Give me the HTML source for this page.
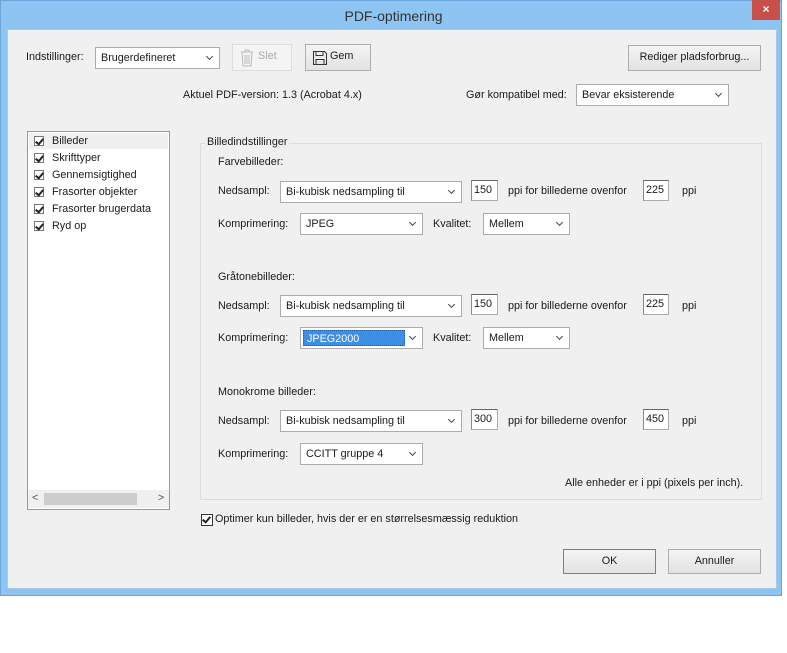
<!DOCTYPE html>
<html><head><meta charset="utf-8"><style>
*{box-sizing:border-box;margin:0;padding:0}
body{width:787px;height:653px;background:#fff;position:relative;font-family:"Liberation Sans",sans-serif;font-size:10.8px;color:#1a1a1a;overflow:hidden}
.a{position:absolute}
.t{position:absolute;white-space:nowrap;line-height:13px}
.frame{left:0;top:0;width:782px;height:596px;background:#8ec4f2;border:1px solid #6aa6dc}
.inner{left:7px;top:29px;width:770px;height:560px;background:#f0f0f0;border:1px solid #a9c9e6}
.combo{position:absolute;background:#fff;border:1px solid #acacac;height:22px;padding:4px 5px;white-space:nowrap}
.combo:after{content:"";position:absolute;right:7px;top:6px;width:4px;height:4px;border-right:1.5px solid #444;border-bottom:1.5px solid #444;transform:rotate(45deg)}
.inp{position:absolute;background:#fff;border:1px solid #abadb3;border-top-color:#666;border-left-color:#888;height:21px;padding:3px 2px}
.btn{position:absolute;background:linear-gradient(#f4f4f4,#e2e2e2);border:1px solid #adadad;text-align:center}
.cb{position:absolute;width:10px;height:10px;border:1px solid #777;background:#fff}
.cb:after{content:"";position:absolute;left:2px;top:0;width:3px;height:6px;border-right:2px solid #222;border-bottom:2px solid #222;transform:rotate(40deg)}
</style></head><body>
<div class="a frame"></div>
<div class="t" style="left:0;width:787px;text-align:center;top:8px;font-size:14px;color:#333;line-height:16px">PDF-optimering</div>
<div class="a" style="left:752px;top:0;width:28px;height:20px;background:#c7504a;color:#fff;text-align:center;font-size:12px;line-height:19px;font-weight:bold">×</div>
<div class="a inner"></div>

<div class="t" style="left:26px;top:51px">Indstillinger:</div>
<div class="combo" style="left:95px;top:47px;width:125px">Brugerdefineret</div>
<div class="btn" style="left:232px;top:44px;width:60px;height:27px;background:#f4f4f4;border-color:#ddd;color:#aaa">
<svg class="a" style="left:7px;top:4px" width="14" height="18" viewBox="0 0 14 18"><path d="M1 3h12M5 3V1h4v2M2 3l1 14h8l1-14M5 6v9M7 6v9M9 6v9" fill="none" stroke="#bbb"/></svg>
<span class="t" style="left:25px;top:5px">Slet</span></div>
<div class="btn" style="left:305px;top:44px;width:66px;height:27px">
<svg class="a" style="left:6px;top:5px" width="16" height="16" viewBox="0 0 16 16"><path d="M1.5 1.5h11l2 2v11h-13zM4 1.5v4h7v-4M4 14.5v-5h8v5" fill="none" stroke="#333"/></svg>
<span class="t" style="left:24px;top:5px">Gem</span></div>
<div class="btn" style="left:628px;top:45px;width:133px;height:26px;line-height:23px">Rediger pladsforbrug...</div>

<div class="t" style="left:183px;top:89px">Aktuel PDF-version: 1.3 (Acrobat 4.x)</div>
<div class="t" style="left:466px;top:89px">Gør kompatibel med:</div>
<div class="combo" style="left:576px;top:84px;width:153px">Bevar eksisterende</div>

<div class="a" style="left:27px;top:131px;width:143px;height:379px;background:#fff;border:1px solid #999"></div>
<div class="a" style="left:29px;top:133px;width:139px;height:16px;background:#f0f0f0"></div>
<div class="cb" style="left:34px;top:136px"></div><div class="t" style="left:52px;top:135px">Billeder</div>
<div class="cb" style="left:34px;top:153px"></div><div class="t" style="left:52px;top:152px">Skrifttyper</div>
<div class="cb" style="left:34px;top:170px"></div><div class="t" style="left:52px;top:169px">Gennemsigtighed</div>
<div class="cb" style="left:34px;top:187px"></div><div class="t" style="left:52px;top:186px">Frasorter objekter</div>
<div class="cb" style="left:34px;top:204px"></div><div class="t" style="left:52px;top:203px">Frasorter brugerdata</div>
<div class="cb" style="left:34px;top:221px"></div><div class="t" style="left:52px;top:220px">Ryd op</div>
<div class="a" style="left:28px;top:490px;width:141px;height:18px;background:#f0f0f0"></div>
<div class="a" style="left:44px;top:493px;width:93px;height:12px;background:#cdcdcd"></div>
<div class="t" style="left:32px;top:492px;color:#555">&lt;</div>
<div class="t" style="left:158px;top:492px;color:#555">&gt;</div>

<div class="a" style="left:200px;top:143px;width:562px;height:357px;border:1px solid #dcdcdc"></div>
<div class="t" style="left:205px;top:136px;background:#f0f0f0;padding:0 2px">Billedindstillinger</div>

<div class="t" style="left:218px;top:156px">Farvebilleder:</div>
<div class="t" style="left:218px;top:185px">Nedsampl:</div>
<div class="combo" style="left:280px;top:181px;width:182px">Bi-kubisk nedsampling til</div>
<div class="inp" style="left:471px;top:180px;width:27px">150</div>
<div class="t" style="left:508px;top:185px">ppi for billederne ovenfor</div>
<div class="inp" style="left:643px;top:180px;width:26px">225</div>
<div class="t" style="left:682px;top:185px">ppi</div>
<div class="t" style="left:218px;top:218px">Komprimering:</div>
<div class="combo" style="left:300px;top:213px;width:123px">JPEG</div>
<div class="t" style="left:433px;top:218px">Kvalitet:</div>
<div class="combo" style="left:483px;top:213px;width:87px">Mellem</div>

<div class="t" style="left:218px;top:271px">Gråtonebilleder:</div>
<div class="t" style="left:218px;top:300px">Nedsampl:</div>
<div class="combo" style="left:280px;top:295px;width:182px">Bi-kubisk nedsampling til</div>
<div class="inp" style="left:471px;top:294px;width:27px">150</div>
<div class="t" style="left:508px;top:300px">ppi for billederne ovenfor</div>
<div class="inp" style="left:643px;top:294px;width:26px">225</div>
<div class="t" style="left:682px;top:300px">ppi</div>
<div class="t" style="left:218px;top:332px">Komprimering:</div>
<div class="combo" style="left:300px;top:327px;width:123px;padding:2px"><span style="display:block;background:#3d8ee6;color:#fff;width:102px;height:16px;padding:2px 3px;border:1px dotted #1f5fa8">JPEG2000</span></div>
<div class="t" style="left:433px;top:332px">Kvalitet:</div>
<div class="combo" style="left:483px;top:327px;width:87px">Mellem</div>

<div class="t" style="left:218px;top:386px">Monokrome billeder:</div>
<div class="t" style="left:218px;top:415px">Nedsampl:</div>
<div class="combo" style="left:280px;top:410px;width:182px">Bi-kubisk nedsampling til</div>
<div class="inp" style="left:471px;top:409px;width:27px">300</div>
<div class="t" style="left:508px;top:415px">ppi for billederne ovenfor</div>
<div class="inp" style="left:643px;top:409px;width:26px">450</div>
<div class="t" style="left:682px;top:415px">ppi</div>
<div class="t" style="left:218px;top:448px">Komprimering:</div>
<div class="combo" style="left:300px;top:443px;width:123px">CCITT gruppe 4</div>
<div class="t" style="left:565px;top:477px">Alle enheder er i ppi (pixels per inch).</div>

<div class="cb" style="left:201px;top:514px;width:12px;height:12px;border-color:#333"></div>
<div class="t" style="left:215px;top:513px">Optimer kun billeder, hvis der er en størrelsesmæssig reduktion</div>

<div class="btn" style="left:563px;top:549px;width:93px;height:25px;line-height:22px;border-color:#3c8fdc">OK</div>
<div class="btn" style="left:668px;top:549px;width:93px;height:25px;line-height:22px">Annuller</div>
</body></html>
